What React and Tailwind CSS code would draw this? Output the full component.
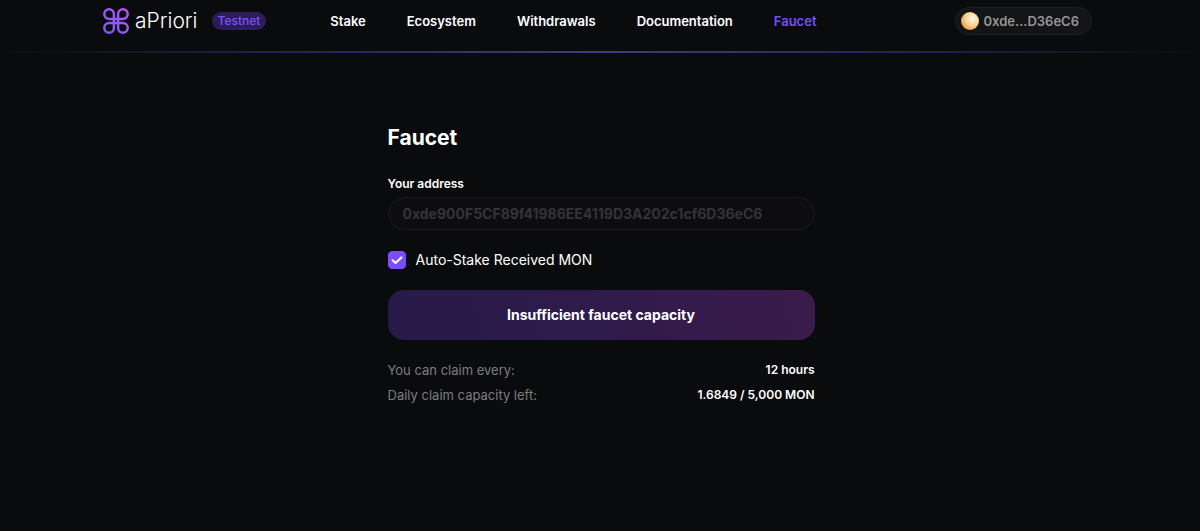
const links = ['Stake', 'Ecosystem', 'Withdrawals', 'Documentation', 'Faucet'];

function Logo() {
  return (
    <svg className="size-[26px]" viewBox="0 0 26 26" fill="none" aria-hidden="true">
      <defs>
        <linearGradient id="mark" x1="24" y1="2" x2="6" y2="24" gradientUnits="userSpaceOnUse">
          <stop stopColor="#c44df0" />
          <stop offset="0.45" stopColor="#9459f5" />
          <stop offset="1" stopColor="#8458f5" />
        </linearGradient>
      </defs>
      <path
        d="M10.9 10.9H6.1A4.8 4.8 0 1 1 10.9 6.1V19.9A4.8 4.8 0 1 1 6.1 15.1H19.9A4.8 4.8 0 1 1 15.1 19.9V6.1A4.8 4.8 0 1 1 19.9 10.9H10.9"
        stroke="url(#mark)"
        strokeWidth="2.5"
      />
    </svg>
  );
}

function Header() {
  return (
    <header>
      <div className="flex items-center pt-[6px] pb-4 pl-[103px] pr-[108px]">
        <a href="#home" className="flex items-center gap-[6px]">
          <Logo />
          <span className="text-[21px] leading-[29px] font-light">aPriori</span>
        </a>
        <span className="ml-[14px] rounded-full bg-[#2d1c5a] px-[6px] text-xs leading-[18px] font-medium text-[#7c52f4]">
          Testnet
        </span>
        <nav className="ml-16 flex gap-[41px] text-[13px] leading-5 font-semibold">
          {links.map((link) => (
            <a
              key={link}
              href={'#' + link.toLowerCase()}
              className={link === 'Faucet' ? 'text-[#7650f5]' : 'text-white'}
            >
              {link}
            </a>
          ))}
        </nav>
        <button
          type="button"
          className="ml-auto flex items-center gap-[5px] rounded-full border border-[#1e1f21] bg-[#131416] py-[2px] pl-[5px] pr-3 text-[13px] leading-[22px] font-semibold text-[#959697]"
        >
          <span className="size-[18px] rounded-full bg-[radial-gradient(circle_at_65%_35%,#fff6e6_0%,#f6d090_45%,#e08c2a_85%)]" />
          0xde...D36eC6
        </button>
      </div>
      <div className="h-[2px] bg-[linear-gradient(90deg,transparent_0%,#241f52_22%,#433a86_50%,#241f52_78%,transparent_100%)]" />
    </header>
  );
}

export default function App() {
  return (
    <div className="min-h-screen bg-[#0a0b0d] font-['Inter',sans-serif] text-white">
      <Header />
      <main className="mx-auto mt-[69px] w-full max-w-[429px] pl-[2px]">
        <h1 className="text-[21px] leading-8 font-bold">Faucet</h1>
        <form>
          <label htmlFor="address" className="mt-5 block text-xs leading-5 font-semibold">
            Your address
          </label>
          <input
            id="address"
            type="text"
            readOnly
            value="0xde900F5CF89f41986EE4119D3A202c1cf6D36eC6"
            className="mt-[3px] block h-[33px] w-full rounded-full border border-[#1a1b1e] bg-[#0d0c11] px-[14px] text-sm font-bold text-[#343438] outline-none"
          />
          <div className="mt-5 flex items-center gap-[10px]">
            <span className="grid size-[18px]">
              <input
                id="auto-stake"
                type="checkbox"
                defaultChecked
                className="peer col-start-1 row-start-1 size-[18px] appearance-none rounded border border-[#7c4dff] checked:bg-[#7c4dff]"
              />
              <svg
                className="pointer-events-none invisible col-start-1 row-start-1 size-[18px] peer-checked:visible"
                viewBox="0 0 18 18"
                fill="none"
                aria-hidden="true"
              >
                <path
                  d="M4.6 9.2 7.6 11.9 13.4 6.4"
                  stroke="white"
                  strokeWidth="2"
                  strokeLinecap="round"
                  strokeLinejoin="round"
                />
              </svg>
            </span>
            <label htmlFor="auto-stake" className="text-sm leading-5">
              Auto-Stake Received MON
            </label>
          </div>
          <button
            type="submit"
            disabled
            className="mt-5 h-[50px] w-full rounded-2xl bg-[linear-gradient(70deg,#271a49_0%,#2f1b4b_50%,#3b1b4c_100%)] text-sm font-bold"
          >
            Insufficient faucet capacity
          </button>
        </form>
        <dl className="mt-5 flex flex-col gap-[5px] leading-5">
          <div className="flex justify-between">
            <dt className="text-[13px] text-[#7d7d80]">You can claim every:</dt>
            <dd className="text-xs leading-5 font-semibold">12 hours</dd>
          </div>
          <div className="flex justify-between">
            <dt className="text-[13px] text-[#7d7d80]">Daily claim capacity left:</dt>
            <dd className="text-xs leading-5 font-semibold">1.6849 / 5,000 MON</dd>
          </div>
        </dl>
      </main>
    </div>
  );
}
